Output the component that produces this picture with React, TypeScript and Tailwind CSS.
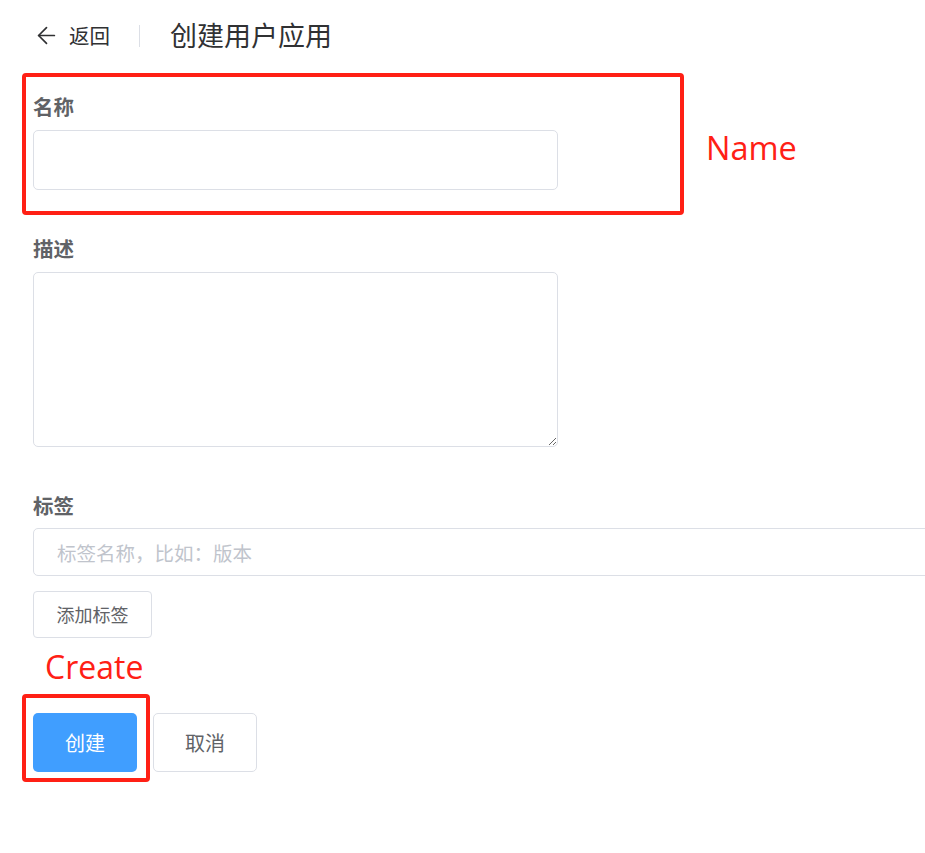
import { ArrowLeft } from "lucide-react";

const cjk = { fontFamily: '"Noto Sans CJK SC", "Noto Sans", sans-serif' };
const latin = { fontFamily: '"Open Sans", "Noto Sans", sans-serif' };

export default function App() {
  return (
    <div className="relative min-h-[853px] w-[925px] overflow-hidden bg-white text-[#303133]" style={cjk}>
      {/* Header */}
      <div className="flex h-[71px] items-center pl-[33px]">
        <button className="flex items-center gap-[9px] text-[#303133]">
          <ArrowLeft size={27} strokeWidth={1.5} />
          <span className="text-[20.5px]">返回</span>
        </button>
        <div className="ml-[29px] mr-[30px] h-[22px] w-px bg-[#dcdfe6]" />
        <h1 className="text-[27px] font-normal text-[#303133]">创建用户应用</h1>
      </div>

      {/* Form */}
      <div className="pl-[33px]">
        <div className="pt-[21px]">
          <label className="block text-[20.5px] font-bold leading-[28px] text-[#606266]">名称</label>
          <input className="mt-[10px] h-[60px] w-[525px] rounded-[5px] border border-[#dcdfe6] px-4 outline-none" />
        </div>

        <div className="pt-[44px]">
          <label className="block text-[20.5px] font-bold leading-[28px] text-[#606266]">描述</label>
          <textarea className="mt-[10px] block h-[175px] w-[525px] rounded-[5px] border border-[#dcdfe6] px-4 py-2 outline-none" />
        </div>

        <div className="pt-[44px]">
          <label className="block text-[20.5px] font-bold leading-[28px] text-[#606266]">标签</label>
          <input
            placeholder="标签名称，比如：版本"
            className="mt-[9px] h-[48px] w-[960px] rounded-[5px] border border-[#dcdfe6] px-[23px] text-[19.5px] outline-none placeholder:text-[#c0c4cc]"
          />
          <button className="mt-[15px] flex h-[47px] w-[119px] items-center justify-center rounded-[4px] border border-[#dcdfe6] bg-white text-[18px] text-[#606266]">
            添加标签
          </button>
        </div>

        <div className="mt-[75px] flex gap-[16px]">
          <button className="h-[59px] w-[104px] rounded-[5px] bg-[#409eff] text-[20px] text-white">创建</button>
          <button className="h-[59px] w-[104px] rounded-[5px] border border-[#dcdfe6] bg-white text-[20px] text-[#606266]">
            取消
          </button>
        </div>
      </div>

      {/* Annotations */}
      <div className="pointer-events-none absolute left-[22px] top-[73px] h-[142px] w-[662px] rounded-[4px] border-[4px] border-[#ff2015]" />
      <span className="absolute left-[706px] top-[124px] text-[32.5px] leading-[48px] text-[#ff2015]" style={latin}>
        Name
      </span>
      <span className="absolute left-[45px] top-[643px] text-[32px] leading-[48px] text-[#ff2015]" style={latin}>
        Create
      </span>
      <div className="pointer-events-none absolute left-[22px] top-[694px] h-[88px] w-[128px] rounded-[4px] border-[4px] border-[#ff2015]" />
    </div>
  );
}
